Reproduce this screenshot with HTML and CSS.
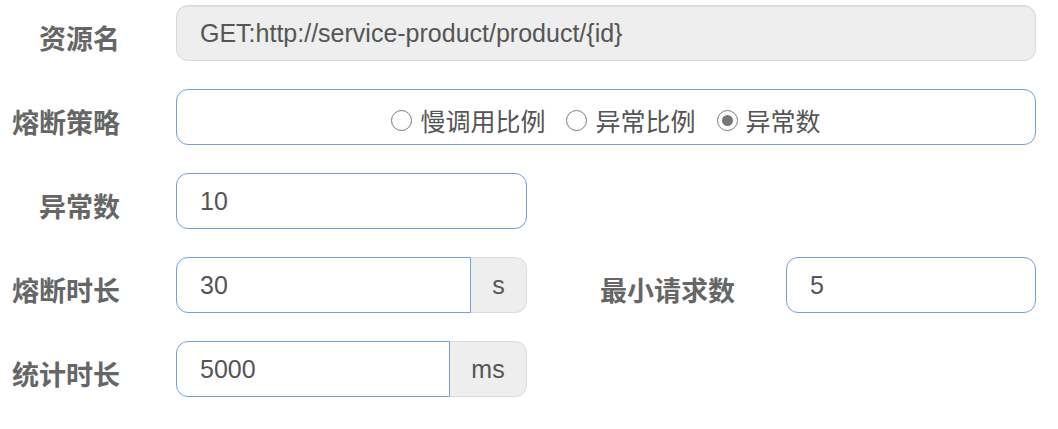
FILE: index.html
```html
<!DOCTYPE html>
<html lang="zh-CN">
<head>
<meta charset="utf-8">
<title>熔断规则</title>
<link rel="stylesheet" href="styles.css">
</head>
<body>
<form class="form">
  <div class="row">
    <label class="lbl">资源名</label>
    <input class="input input-disabled w-full" type="text" value="GET:http://service-product/product/{id}" disabled>
  </div>
  <div class="row">
    <label class="lbl">熔断策略</label>
    <div class="radios w-full">
      <span class="opt"><span class="radio"></span><span class="opt-text">慢调用比例</span></span>
      <span class="opt"><span class="radio"></span><span class="opt-text">异常比例</span></span>
      <span class="opt"><span class="radio radio-on"></span><span class="opt-text">异常数</span></span>
    </div>
  </div>
  <div class="row">
    <label class="lbl">异常数</label>
    <input class="input w-half" type="text" value="10">
  </div>
  <div class="row">
    <label class="lbl">熔断时长</label>
    <div class="group">
      <input class="input" type="text" value="30">
      <span class="addon addon-s">s</span>
    </div>
    <label class="lbl lbl-inline">最小请求数</label>
    <input class="input w-min" type="text" value="5">
  </div>
  <div class="row">
    <label class="lbl">统计时长</label>
    <div class="group">
      <input class="input" type="text" value="5000">
      <span class="addon addon-ms">ms</span>
    </div>
  </div>
</form>
</body>
</html>
```

FILE: styles.css
```css
html, body {
  margin: 0;
  background: #fff;
}
body {
  font-family: "Liberation Sans", Arial, sans-serif;
}
.form {
  display: flex;
  flex-direction: column;
  gap: 28px;
  padding-top: 5px;
}
.row {
  display: flex;
  align-items: center;
  height: 56px;
  flex: none;
}
.lbl {
  box-sizing: border-box;
  width: 120px;
  margin-right: 56px;
  padding-top: 8px;
  text-align: right;
  font-family: "Noto Sans CJK SC", sans-serif;
  font-weight: 700;
  font-size: 27px;
  line-height: 1;
  color: #666;
  white-space: nowrap;
  flex: none;
}
.lbl-inline {
  width: auto;
  margin-left: 73px;
  margin-right: 51px;
}
.input {
  box-sizing: border-box;
  height: 56px;
  margin: 0;
  padding: 0 23px;
  border: 1px solid #6fa3d8;
  border-radius: 12px;
  background: #fff;
  font-family: "Liberation Sans", Arial, sans-serif;
  font-size: 25px;
  color: #555;
  outline: none;
  flex: none;
}
.input-disabled {
  background: #eeeeee;
  border-color: #d8d8d8;
  color: #555;
  -webkit-text-fill-color: #555;
  opacity: 1;
  box-shadow: inset 0 1px 1px rgba(0, 0, 0, 0.06);
}
.w-full {
  width: 860px;
}
.w-half {
  width: 351px;
}
.w-min {
  width: 250px;
}
.group {
  display: flex;
  width: 351px;
  flex: none;
}
.group .input {
  flex: 1;
  min-width: 0;
  border-radius: 12px 0 0 12px;
}
.addon {
  box-sizing: border-box;
  height: 56px;
  display: flex;
  align-items: center;
  justify-content: center;
  background: #eee;
  border: 1px solid #dcdcdc;
  border-left: none;
  border-radius: 0 12px 12px 0;
  font-size: 25px;
  color: #555;
  flex: none;
}
.addon-s {
  width: 56px;
}
.addon-ms {
  width: 77px;
}
.radios {
  box-sizing: border-box;
  height: 56px;
  display: flex;
  align-items: center;
  justify-content: center;
  gap: 21px;
  border: 1px solid #6fa3d8;
  border-radius: 12px;
  background: #fff;
  flex: none;
}
.opt {
  display: flex;
  align-items: center;
  gap: 8px;
  padding-top: 6px;
}
.opt-text {
  font-family: "Noto Sans CJK SC", sans-serif;
  font-size: 25px;
  line-height: 1;
  color: #555;
}
.radio {
  box-sizing: border-box;
  width: 21px;
  height: 21px;
  border: 1.5px solid #7a7a7a;
  border-radius: 50%;
  background: #fff;
  display: flex;
  align-items: center;
  justify-content: center;
}
.radio-on::after {
  content: "";
  width: 11px;
  height: 11px;
  border-radius: 50%;
  background: #777;
}
```
